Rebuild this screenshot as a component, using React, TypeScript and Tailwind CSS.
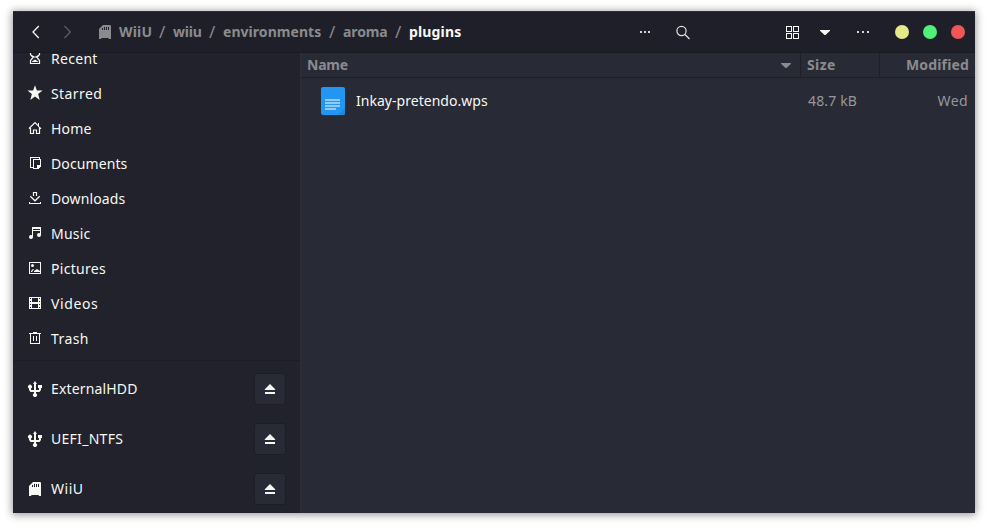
import type { ReactNode } from "react";

function Icon({ children, className = "", crisp = false }: { children: ReactNode; className?: string; crisp?: boolean }) {
  return (
    <svg
      width="16"
      height="16"
      viewBox="0 0 16 16"
      fill="currentColor"
      shapeRendering={crisp ? "crispEdges" : undefined}
      className={`block shrink-0 ${className}`}
    >
      {children}
    </svg>
  );
}

const line = { fill: "none", stroke: "currentColor", strokeWidth: 1 };

const RecentIcon = () => (
  <Icon>
    <path {...line} strokeWidth={1.2} d="M3.500 2v2.500L6 7.500 3.500 10.500v3h9v-3L10 7.500l2.500-3V2M4.500 5.500L7 7h2l2.500-1.500" />
    <path d="M5 11.500L8 9.500l3 2v.5H5z" />
  </Icon>
);
const StarIcon = () => (
  <Icon>
    <path d="M8 .3l1.900 5.300h5.700l-4.500 3.500 1.600 5.900L8 11.600 3.300 15l1.600-5.900L.4 5.600h5.700z" />
  </Icon>
);
const HomeIcon = () => (
  <Icon>
    <path {...line} strokeWidth={1.2} d="M2 8.500L8 2.600l3 3M3.500 8v5.500h3v-3.500h3v3.500h3V8M12 7l2 1.700" />
    <path d="M11 3h1v4h-1z" />
  </Icon>
);
const DocumentsIcon = () => (
  <Icon crisp>
    <path d="M3 2h10v1H4v10H3zM3 12h4v1H3z" />
    <path fillRule="evenodd" d="M6 4h8v7l-3 3H6zm1 1v8h3v-3h3V5z" />
    <path d="M12 2h1v3h-1z" />
  </Icon>
);
const DownloadsIcon = () => (
  <Icon>
    <path {...line} strokeWidth={1.2} d="M6.500 6V2.500h3V6M3.300 6.200L8 10.800l4.700-4.600" />
    <path d="M2 13h12v1H2zM2 12h1v1H2zM13 12h1v1h-1z" />
  </Icon>
);
const MusicIcon = () => (
  <Icon>
    <path d="M5 2h9v8h-1V6H6v6H5zm1 2v1h7V4z" fillRule="evenodd" />
    <circle cx="4" cy="12" r="2" />
    <circle cx="12" cy="10" r="2" />
  </Icon>
);
const PicturesIcon = () => (
  <Icon>
    <path fillRule="evenodd" d="M2 2h12v12H2zm1 1v10h10V3z" />
    <circle cx="5.500" cy="5.500" r="1.500" />
    <path d="M4 12v-1l2-2h1l-2 3zM7 12v-1l3-2 3 2v1z" />
  </Icon>
);
const VideosIcon = () => (
  <Icon crisp>
    <path
      fillRule="evenodd"
      d="M2 2h12v12H2zM5 3v4h6V3zM5 9v4h6V9zM3 3v1h1V3zM3 6v1h1V6zM3 9v1h1V9zM3 12v1h1v-1zM12 3v1h1V3zM12 6v1h1V6zM12 9v1h1V9zM12 12v1h1v-1z"
    />
  </Icon>
);
const TrashIcon = () => (
  <Icon crisp>
    <path d="M2 3h4V2h4v1h4v1h-1v10H3V4H2zM4 4v9h8V4z" fillRule="evenodd" />
    <path d="M6 6h1v5H6zM9 6h1v5H9z" />
  </Icon>
);
const UsbIcon = () => (
  <Icon>
    <path d="M8 0l2 3H9v6h2.500l.5-.5V7h-1V4h4v3h-1v2l-1.500 2H9v1.300a2 2 0 1 1-2 0V11H3.500L2 9V7.500A2 2 0 1 1 4 7.500v1l.5.5H7V3H6z" />
  </Icon>
);
const SdIcon = ({ className = "" }: { className?: string }) => (
  <Icon className={className}>
    <path
      fillRule="evenodd"
      d="M6 1h7a1 1 0 0 1 1 1v13h-2l-.5-1h-7L4 15H2V5zM5 4v2h1V4zM7 3v3h1V3zM9 3v3h1V3zM11 3v3h1V3z"
    />
  </Icon>
);
const EjectIcon = () => (
  <Icon>
    <path d="M8 3l5.200 5.200V9H2.800v-.8zM3 11h10v2H3z" />
  </Icon>
);

const places = [
  { label: "Recent", icon: <RecentIcon />, tracking: "tracking-[0.3px]" },
  { label: "Starred", icon: <StarIcon />, tracking: "tracking-[0.4px]" },
  { label: "Home", icon: <HomeIcon />, tracking: "tracking-[0.15px]" },
  { label: "Documents", icon: <DocumentsIcon />, tracking: "tracking-[0.1px]" },
  { label: "Downloads", icon: <DownloadsIcon />, tracking: "tracking-[0.1px]" },
  { label: "Music", icon: <MusicIcon />, tracking: "tracking-[0.2px]" },
  { label: "Pictures", icon: <PicturesIcon />, tracking: "tracking-[0.3px]" },
  { label: "Videos", icon: <VideosIcon />, tracking: "tracking-[0.6px]" },
  { label: "Trash", icon: <TrashIcon />, tracking: "tracking-[0.4px]" },
];

const drives = [
  { label: "ExternalHDD", icon: <UsbIcon />, tracking: "tracking-[0.15px]" },
  { label: "UEFI_NTFS", icon: <UsbIcon />, tracking: "tracking-[0.28px]" },
  { label: "WiiU", icon: <SdIcon />, tracking: "tracking-[0.5px]" },
];

const crumbs = [
  { label: "WiiU", style: "w-[54px] tracking-[0.2px]" },
  { label: "wiiu", style: "w-[50px] tracking-[-0.2px]" },
  { label: "environments", style: "w-[120px] tracking-[0.05px]" },
  { label: "aroma", style: "w-[66px] tracking-[-0.1px]" },
];

function Header() {
  return (
    <header className="flex h-[42px] shrink-0 items-center border-t border-b border-t-[#2f3039] border-b-[#191a21] bg-[#1e1f29]">
      <Icon className="ml-[15px] text-[#f8f8f2]">
        <path {...line} strokeWidth={1.3} d="M10.800 2L5 8l5.800 6" />
      </Icon>
      <Icon className="ml-4 text-[#5d5e64]">
        <path {...line} strokeWidth={1.3} d="M4.500 2l5.800 6-5.800 6" />
      </Icon>
      <SdIcon className="ml-[21px] text-[#8b8b8d]" />
      <nav className="ml-[6px] flex w-[522px] items-center font-bold text-[#8b8b8d]">
        {crumbs.map((c) => (
          <span key={c.label} className={`flex shrink-0 justify-between ${c.style}`}>
            <span>{c.label}</span>
            <span className="w-[17px] pl-[3px] text-[17px] font-normal tracking-normal">/</span>
          </span>
        ))}
        <span className="tracking-[0.15px] text-[#f8f8f2]">plugins</span>
      </nav>
      <div className="ml-[-1px] flex gap-[2px]">
        <i className="size-[2px] bg-[#d5d5d2]" />
        <i className="size-[2px] bg-[#d5d5d2]" />
        <i className="size-[2px] bg-[#d5d5d2]" />
      </div>
      <Icon className="ml-[25px] text-[#e2e2de]">
        <circle {...line} strokeWidth={1.200} cx="6.500" cy="7" r="4.600" />
        <path {...line} strokeWidth={1.300} d="M10 10.500l4.500 4.500" />
      </Icon>
      <Icon crisp className="ml-[93px] text-[#f8f8f2]">
        <path fillRule="evenodd" d="M2 2h6v6H2zm1 1v4h4V3zM9 2h6v6H9zm1 1v4h4V3zM2 9h6v6H2zm1 1v4h4v-4zM9 9h6v6H9zm1 1v4h4v-4z" />
      </Icon>
      <Icon className="ml-[17px] text-[#f8f8f2]">
        <path d="M3 6h10v.7L8.500 11h-1L3 6.700z" />
      </Icon>
      <div className="ml-[24px] flex gap-[3px]">
        <i className="size-[2px] bg-[#d5d5d2]" />
        <i className="size-[2px] bg-[#d5d5d2]" />
        <i className="size-[2px] bg-[#d5d5d2]" />
      </div>
      <div className="ml-[26px] flex gap-[14px]">
        <i className="size-[14px] rounded-full bg-[#e4ea88]" />
        <i className="size-[14px] rounded-full bg-[#50f17a]" />
        <i className="size-[14px] rounded-full bg-[#f15656]" />
      </div>
    </header>
  );
}

function Sidebar() {
  return (
    <aside className="flex w-[287px] shrink-0 flex-col overflow-hidden bg-[#21222c] text-[#f8f8f2]">
      <ul className="-mt-[12px] shrink-0">
        {places.map((p) => (
          <li key={p.label} className="flex h-[35px] items-start pt-[9px] pl-[14px]">
            {p.icon}
            <span className={`mt-[3px] ml-2 leading-[11px] ${p.tracking}`}>{p.label}</span>
          </li>
        ))}
      </ul>
      <div className="mt-[4px] h-px shrink-0 bg-[#1c1d26]" />
      <ul className="mt-[3px] shrink-0">
        {drives.map((d) => (
          <li key={d.label} className="flex h-[50px] items-center pr-[14px] pl-[14px]">
            {d.icon}
            <span className={`ml-2 ${d.tracking}`}>{d.label}</span>
            <button className="ml-auto flex size-8 items-center justify-center rounded-[3px] border border-[#1c1d26] bg-[#282a36]">
              <EjectIcon />
            </button>
          </li>
        ))}
      </ul>
    </aside>
  );
}

function FileList() {
  return (
    <main className="flex grow flex-col border-l border-[#2d2e38] bg-[#282a36]">
      <div className="flex h-[25px] shrink-0 border-b border-[#1e1f29] font-bold text-[#8b8b8f]">
        <div className="flex w-[500px] items-center justify-between border-r border-[#1e1f29] pr-[6px] pl-[6px]">
          <span className="tracking-[-0.2px]">Name</span>
          <Icon>
            <path d="M3 6h10v.7L8.500 11h-1L3 6.700z" />
          </Icon>
        </div>
        <div className="flex w-[79px] items-center border-r border-[#1e1f29] pl-[6px] tracking-[0.4px]">Size</div>
        <div className="flex grow items-center justify-end pr-[6px] tracking-[0.15px]">Modified</div>
      </div>
      <div className="flex h-[46px] items-center pl-[20px]">
        <svg width="24" height="28" viewBox="0 0 24 28" className="block shrink-0">
          <rect width="24" height="28" rx="2" fill="#2196f3" />
          <path d="M24 21v5a2 2 0 0 1-2 2h-5z" fill="#1e88e0" />
          <path d="M4 12h15v2H4zM4 15h15v2H4zM4 18h15v2H4zM4 21h11v2H4z" fill="#90cbf9" />
        </svg>
        <span className="ml-[11px] w-[452px] tracking-[0.03px] text-[#f8f8f2]">Inkay-pretendo.wps</span>
        <span className="tracking-[0.15px] text-[#97979b]">48.7 kB</span>
        <span className="ml-auto pr-[7px] tracking-[0.4px] text-[#97979b]">Wed</span>
      </div>
    </main>
  );
}

export default function App() {
  return (
    <div className="h-[528px] w-[988px] overflow-hidden bg-white pt-[11px] pl-[13px] font-['Noto_Sans','Open_Sans',sans-serif] text-[14px] leading-5">
      <div className="flex h-[502px] w-[962px] flex-col overflow-hidden shadow-[0_1px_8px_1px_rgba(0,0,0,0.4)]">
        <Header />
        <div className="flex min-h-0 grow">
          <Sidebar />
          <FileList />
        </div>
      </div>
    </div>
  );
}
